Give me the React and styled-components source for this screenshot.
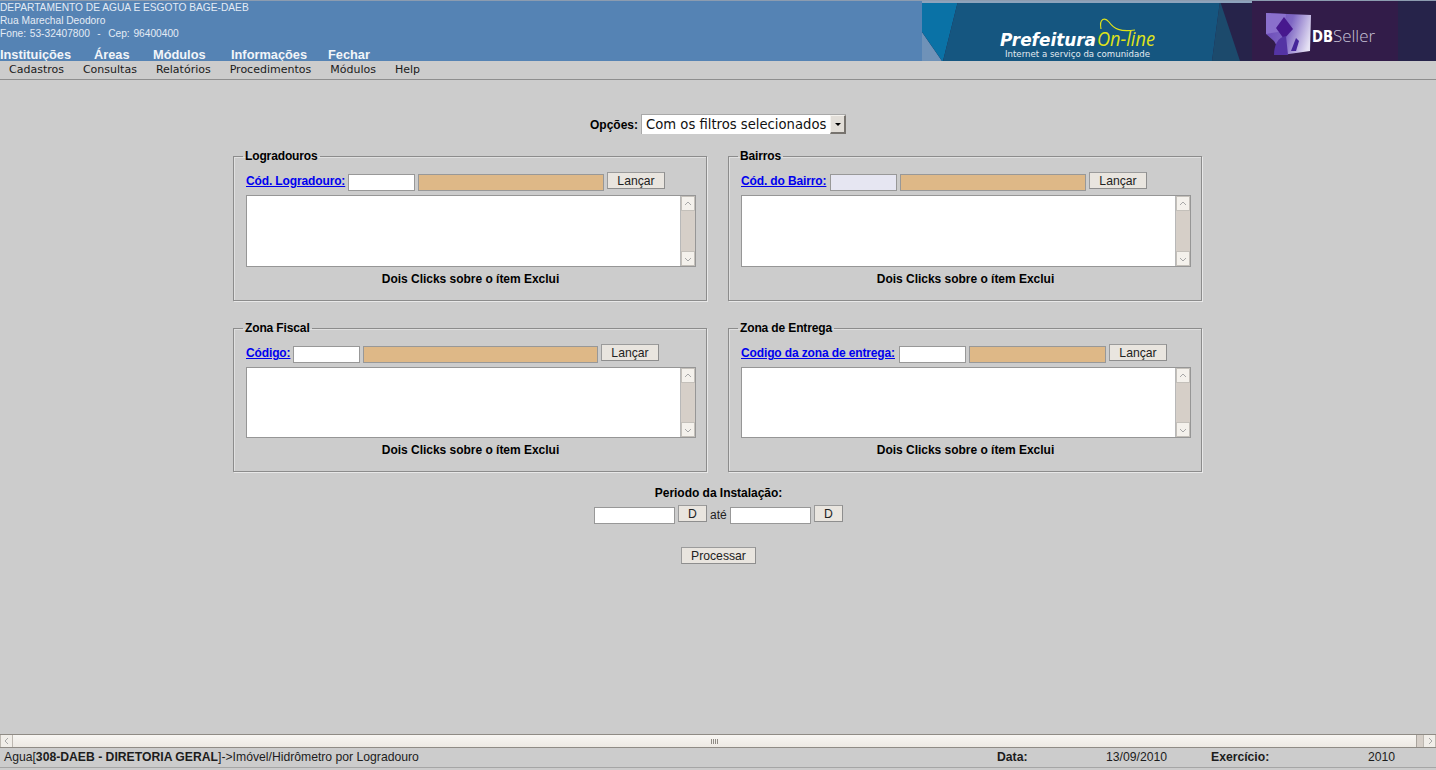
import React from "react";
import styled, { createGlobalStyle } from "styled-components";

const Global = createGlobalStyle`
  html, body { margin: 0; padding: 0; height: 100%; overflow: hidden; background: #cccccc; }
  #root { height: 100%; }
  * { box-sizing: border-box; }
`;

const Page = styled.div`
  height: 770px;
  display: flex;
  flex-direction: column;
  font-family: "Liberation Sans", Arial, sans-serif;
  font-size: 12px;
  color: #000;
  background: #cccccc;
`;

const Header = styled.header`
  height: 61px;
  flex: none;
  display: flex;
  justify-content: space-between;
  background: #5583b4;
  border-top: 1px solid #8c9cb0;
  overflow: hidden;
`;

const Identity = styled.div`
  display: flex;
  flex-direction: column;
`;

const InfoLine = styled.div`
  height: 13px;
  line-height: 13px;
  font-size: 10.2px;
  word-spacing: ${(p) => (p.$wide ? "0.9px" : "0")};
  color: #e4ebf4;
  white-space: pre;
`;

const MainNav = styled.nav`
  display: flex;
  margin-top: 8px;
`;

const MainNavItem = styled.a`
  font-size: 12.8px;
  line-height: 13px;
  font-weight: 700;
  color: #f2f5f9;
  width: ${(p) => p.$w}px;
`;

const BannerArt = styled.svg`
  display: block;
  width: 514px;
  height: 60px;
  flex: none;
`;

const MenuBar = styled.nav`
  height: 19px;
  flex: none;
  display: flex;
  gap: 19px;
  padding-left: 9px;
  border-bottom: 1px solid #8e8e8e;
  font-family: "DejaVu Sans", Verdana, sans-serif;
  font-size: 11px;
  line-height: 18px;
  color: #1a1a1a;
`;

const Main = styled.main`
  flex: 1;
  min-height: 0;
  display: flex;
  flex-direction: column;
  padding-top: 34px;
`;

const OptionsRow = styled.div`
  height: 20px;
  display: flex;
  align-items: center;
  justify-content: center;
  gap: 3px;
`;

const OptionsLabel = styled.label`
  margin-top: 2px;
  font-weight: 700;
`;

const FakeSelect = styled.div`
  width: 205px;
  height: 20px;
  display: flex;
  background: #fff;
  border: 1px solid #a8a8a8;
  border-right: 0;
  border-bottom: 0;
  font-family: "DejaVu Sans", Verdana, sans-serif;
  font-size: 13.2px;
  font-weight: 400;
  line-height: 20px;
  color: #111;
`;

const SelectText = styled.span`
  flex: 1;
  padding-left: 4px;
  white-space: nowrap;
`;

const SelectArrow = styled.span`
  width: 16px;
  height: 19px;
  flex: none;
  display: flex;
  align-items: center;
  justify-content: center;
  background: #e2ded8;
  border-top: 1px solid #f4f2ee;
  border-left: 1px solid #f4f2ee;
  border-right: 2px solid #77736e;
  border-bottom: 2px solid #77736e;
  &::after {
    content: "";
    border-left: 3px solid transparent;
    border-right: 3px solid transparent;
    border-top: 3px solid #000;
  }
`;

const Filters = styled.div`
  display: grid;
  grid-template-columns: 474px 474px;
  column-gap: 21px;
  row-gap: 21px;
  width: 969px;
  margin: 16px 0 0 233px;
`;

const Group = styled.fieldset`
  margin: 0;
  min-width: 0;
  padding: 9px 11px 14px 12px;
  border: 1px solid #8c8c8c;
  box-shadow: 1px 1px 0 #e8e8e8, inset 1px 1px 0 #e0e0e0;
`;

const GroupTitle = styled.legend`
  margin-left: -3px;
  padding: 0 2px;
  font-size: 12px;
  line-height: 13px;
  font-weight: 700;
  letter-spacing: -0.13px;
`;

const PickRow = styled.div`
  display: flex;
  align-items: flex-start;
  gap: 3px;
  height: 19px;
`;

const CodeLink = styled.a`
  width: ${(p) => p.$w}px;
  flex: none;
  margin-top: 2px;
  font-weight: 700;
  line-height: 15px;
  letter-spacing: -0.13px;
  color: #0000ee;
  text-decoration: underline;
  white-space: nowrap;
`;

const Field = styled.div`
  width: ${(p) => p.$w}px;
  height: 17px;
  margin-top: 2px;
  flex: none;
  background: ${(p) => p.$bg || "#fff"};
  border: 1px solid #989898;
`;

const ActionButton = styled.button`
  width: ${(p) => p.$w}px;
  height: 17px;
  flex: none;
  padding: 1px 0 0;
  background: #e9e5df;
  border: 1px solid #9b9b9b;
  border-right-color: #8e8e8e;
  border-bottom-color: #8e8e8e;
  font-family: "Liberation Sans", Arial, sans-serif;
  font-size: 12.2px;
  line-height: 14px;
  color: #222;
`;

const ListBox = styled.div`
  height: ${(p) => p.$h}px;
  margin-top: 4px;
  width: 450px;
  display: flex;
  justify-content: flex-end;
  background: #fff;
  border: 1px solid #969696;
`;

const ListScroll = styled.div`
  width: 15px;
  display: flex;
  flex-direction: column;
  background: #d6cfc8;
  border-left: 1px solid #b8b8b8;
`;

const ListScrollBtn = styled.span`
  height: 15px;
  flex: none;
  display: flex;
  align-items: center;
  justify-content: center;
  background: #f4f1ec;
  border: 1px solid #c4c0ba;
  margin-top: ${(p) => (p.$end ? "auto" : "0")};
`;

const Hint = styled.div`
  margin-top: 5px;
  text-align: center;
  font-weight: 700;
  line-height: 14px;
  letter-spacing: -0.02px;
`;

const PeriodTitle = styled.div`
  margin-top: 14px;
  margin-left: 1px;
  text-align: center;
  font-weight: 700;
  line-height: 14px;
  letter-spacing: -0.03px;
`;

const PeriodRow = styled.div`
  display: flex;
  align-items: flex-start;
  justify-content: center;
  gap: 3px;
  height: 19px;
  margin-top: 5px;
  margin-left: 1px;
  color: #222;
`;

const PeriodWord = styled.span`
  width: 17px;
  margin-top: 3px;
  line-height: 15px;
`;

const SubmitRow = styled.div`
  display: flex;
  justify-content: center;
  margin-top: 23px;
  margin-left: 1px;
`;

const Spacer = styled.div`
  flex: 1;
`;

const HScroll = styled.div`
  height: 14px;
  flex: none;
  display: flex;
  border-top: 1px solid #8f8b85;
  border-bottom: 1px solid #8f8b85;
  background: #d6cfc8;
`;

const HScrollBtn = styled.span`
  width: 13px;
  flex: none;
  display: flex;
  align-items: center;
  justify-content: center;
  background: #f1eee9;
  border-right: 1px solid #bdb8b1;
  border-left: 1px solid #bdb8b1;
`;

const HScrollThumb = styled.span`
  width: 1404px;
  display: flex;
  align-items: center;
  justify-content: center;
  gap: 1px;
  background: linear-gradient(#f8f6f3, #ede9e3);
  border-right: 1px solid #a9a49d;
`;

const Grip = styled.i`
  width: 1px;
  height: 5px;
  background: #8f8b85;
`;

const StatusBar = styled.footer`
  height: 20px;
  flex: none;
  display: flex;
  margin-bottom: 2px;
  border-bottom: 1px solid #a6a6a6;
  font-size: 12.2px;
  line-height: 18px;
  color: #1c1c1c;
`;

const StatusPath = styled.div`
  flex: 1;
  padding-left: 4px;
  white-space: nowrap;
`;

const StatusCell = styled.div`
  width: ${(p) => p.$w}px;
  flex: none;
  font-weight: ${(p) => (p.$bold ? 700 : 400)};
`;

const Chevron = ({ dir }) => {
  const d = { up: "M1 5 L4 2 L7 5", down: "M1 3 L4 6 L7 3", left: "M5 1 L2 4 L5 7", right: "M3 1 L6 4 L3 7" }[dir];
  return (
    <svg width="8" height="8" viewBox="0 0 8 8" fill="none" stroke="#a8a8a8" strokeWidth="1">
      <path d={d} />
    </svg>
  );
};

const Banner = () => (
  <BannerArt viewBox="0 0 514 60" aria-label="Prefeitura On-line DBSeller">
    <defs>
      <linearGradient id="dbMark" x1="0" y1="0.3" x2="1" y2="0.6">
        <stop offset="0" stopColor="#6a48b8" />
        <stop offset="0.5" stopColor="#7f68c4" />
        <stop offset="1" stopColor="#e6e2f4" />
      </linearGradient>
    </defs>
    <rect width="514" height="60" fill="#26234a" />
    <polygon points="0,31 20,60 0,60" fill="#6f92b8" />
    <polygon points="0,0 36,0 21,60 20,60 0,31" fill="#0a72a6" />
    <polygon points="36,0 298,0 290,60 21,60" fill="#155680" />
    <polygon points="298,0 318,60 290,60" fill="#1c4a6c" />
    <rect x="330" width="146" height="60" fill="#321c49" />
    <rect width="330" height="2" fill="#8da3bc" />
    <text y="45" fontFamily="'DejaVu Sans',sans-serif" fontSize="18" fontStyle="italic" fontWeight="700" fill="#fff">
      <tspan x="78" textLength="96" lengthAdjust="spacingAndGlyphs">Prefeitura</tspan>
      <tspan x="175" textLength="58" lengthAdjust="spacingAndGlyphs" fontFamily="'Open Sans','Liberation Sans',sans-serif" fontSize="20" fontWeight="400" fill="#dfe21a">On-line</tspan>
    </text>
    <path d="M179 28 C177 17 183 16 187 21 C192 28 198 31 213 29" fill="none" stroke="#dfe21a" strokeWidth="1.2" />
    <text x="83" y="56" fontFamily="'DejaVu Sans',sans-serif" fontSize="9" fill="#e3ebf1" textLength="145" lengthAdjust="spacingAndGlyphs">Internet a serviço da comunidade</text>
    <polygon points="344,12 389,14 388,50 360,54 352,40 344,33" fill="url(#dbMark)" />
    <polygon points="344,12 364,13 362,30 344,33" fill="#8a70cc" />
    <polygon points="362,16 371,28 362,38 354,27" fill="#47188e" />
    <path d="M352 54 C352 44 356 36 364 35 L366 54 Z" fill="#5434a4" />
    <path d="M369 50 L374 37 L377 40 L374 50 Z" fill="#45259a" />
    <text y="41" fontFamily="'DejaVu Sans',sans-serif" fontSize="15" fontWeight="700" fill="#fff">
      <tspan x="390" textLength="21" lengthAdjust="spacingAndGlyphs">DB</tspan>
      <tspan x="411" textLength="42" lengthAdjust="spacingAndGlyphs" fontFamily="'Open Sans','Liberation Sans',sans-serif" fontSize="17" fontWeight="300" fill="#c9c3d8">Seller</tspan>
    </text>
  </BannerArt>
);

const FilterGroup = ({ title, link, linkW, codeBg, descW, listH }) => (
  <Group>
    <GroupTitle>{title}</GroupTitle>
    <PickRow>
      <CodeLink href="#" $w={linkW}>{link}</CodeLink>
      <Field $w={67} $bg={codeBg} />
      <Field $w={descW} $bg="#deb887" />
      <ActionButton $w={58}>Lançar</ActionButton>
    </PickRow>
    <ListBox $h={listH}>
      <ListScroll>
        <ListScrollBtn><Chevron dir="up" /></ListScrollBtn>
        <ListScrollBtn $end><Chevron dir="down" /></ListScrollBtn>
      </ListScroll>
    </ListBox>
    <Hint>Dois Clicks sobre o ítem Exclui</Hint>
  </Group>
);

export default function App() {
  return (
    <Page>
      <Global />
      <Header>
        <Identity>
          <InfoLine>DEPARTAMENTO DE AGUA E ESGOTO BAGE-DAEB</InfoLine>
          <InfoLine>Rua Marechal Deodoro</InfoLine>
          <InfoLine $wide>{"Fone: 53-32407800  -  Cep: 96400400"}</InfoLine>
          <MainNav>
            <MainNavItem $w={94}>Instituições</MainNavItem>
            <MainNavItem $w={59}>Áreas</MainNavItem>
            <MainNavItem $w={78}>Módulos</MainNavItem>
            <MainNavItem $w={97}>Informações</MainNavItem>
            <MainNavItem $w={50}>Fechar</MainNavItem>
          </MainNav>
        </Identity>
        <Banner />
      </Header>
      <MenuBar>
        <span>Cadastros</span>
        <span>Consultas</span>
        <span>Relatórios</span>
        <span>Procedimentos</span>
        <span>Módulos</span>
        <span>Help</span>
      </MenuBar>
      <Main>
        <OptionsRow>
          <OptionsLabel>Opções:</OptionsLabel>
          <FakeSelect>
            <SelectText>Com os filtros selecionados</SelectText>
            <SelectArrow />
          </FakeSelect>
        </OptionsRow>
        <Filters>
          <FilterGroup title="Logradouros" link="Cód. Logradouro:" linkW={99} descW={186} listH={72} />
          <FilterGroup title="Bairros" link="Cód. do Bairro:" linkW={86} codeBg="#e6e6f2" descW={186} listH={72} />
          <FilterGroup title="Zona Fiscal" link="Código:" linkW={44} descW={235} listH={71} />
          <FilterGroup title="Zona de Entrega" link="Codigo da zona de entrega:" linkW={155} descW={137} listH={71} />
        </Filters>
        <PeriodTitle>Periodo da Instalação:</PeriodTitle>
        <PeriodRow>
          <Field $w={81} />
          <ActionButton $w={29}>D</ActionButton>
          <PeriodWord>até</PeriodWord>
          <Field $w={81} />
          <ActionButton $w={29}>D</ActionButton>
        </PeriodRow>
        <SubmitRow>
          <ActionButton $w={75}>Processar</ActionButton>
        </SubmitRow>
        <Spacer />
      </Main>
      <HScroll>
        <HScrollBtn><Chevron dir="left" /></HScrollBtn>
        <HScrollThumb><Grip /><Grip /><Grip /><Grip /></HScrollThumb>
        <Spacer />
        <HScrollBtn><Chevron dir="right" /></HScrollBtn>
      </HScroll>
      <StatusBar>
        <StatusPath>
          Agua[<b>308-DAEB - DIRETORIA GERAL</b>]-&gt;Imóvel/Hidrômetro por Logradouro
        </StatusPath>
        <StatusCell $bold $w={109}>Data:</StatusCell>
        <StatusCell $w={105}>13/09/2010</StatusCell>
        <StatusCell $bold $w={157}>Exercício:</StatusCell>
        <StatusCell $w={68}>2010</StatusCell>
      </StatusBar>
    </Page>
  );
}
